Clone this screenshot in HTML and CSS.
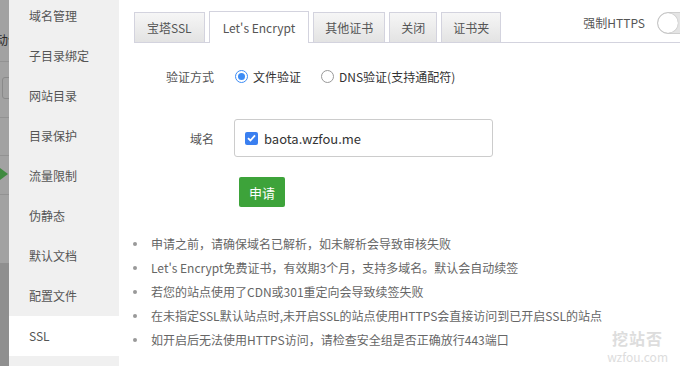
FILE: index.html
```html
<!DOCTYPE html>
<html lang="zh-CN">
<head>
  <meta charset="UTF-8" />
  <title>网站设置 - SSL</title>
  <link rel="stylesheet" href="styles.css">
</head>
<body>

  <div class="backdrop">
    <div class="bd-row bd-first"><span class="bd-text">活动创</span></div>
    <div class="bd-row bd-btns"><span class="bd-btn"></span></div>
    <div class="bd-row bd-short"></div>
    <div class="bd-row bd-play"><span class="play"></span></div>
    <div class="bd-row bd-mid"></div>
    <div class="bd-dark"></div>
  </div>

  <div class="sidebar">
    <a href="#">域名管理</a>
    <a href="#">子目录绑定</a>
    <a href="#">网站目录</a>
    <a href="#">目录保护</a>
    <a href="#">流量限制</a>
    <a href="#">伪静态</a>
    <a href="#">默认文档</a>
    <a href="#">配置文件</a>
    <a href="#" class="active">SSL</a>
  </div>

  <div class="main">
    <div class="tabbar">
      <div class="tab">宝塔SSL</div>
      <div class="tab active">Let's Encrypt</div>
      <div class="tab">其他证书</div>
      <div class="tab">关闭</div>
      <div class="tab">证书夹</div>
      <div class="force">
        <span>强制HTTPS</span>
        <span class="switch"><span class="knob"></span></span>
      </div>
    </div>

    <div class="form-row">
      <label class="form-label">验证方式</label>
      <div class="radios">
        <span class="radio checked"></span><span class="radio-text">文件验证</span>
        <span class="radio"></span><span class="radio-text">DNS验证(支持通配符)</span>
      </div>
    </div>

    <div class="form-row domain-row">
      <label class="form-label">域名</label>
      <div class="domain-box">
        <span class="check">
          <svg width="9" height="8" viewBox="0 0 9 8"><path d="M1 4.2 L3.4 6.5 L8 1.3" fill="none" stroke="#fff" stroke-width="1.8"/></svg>
        </span>
        <span class="domain">baota.wzfou.me</span>
      </div>
    </div>

    <div class="form-row btn-row">
      <button class="apply">申请</button>
    </div>

    <ul class="tips">
      <li>申请之前，请确保域名已解析，如未解析会导致审核失败</li>
      <li>Let's Encrypt免费证书，有效期3个月，支持多域名。默认会自动续签</li>
      <li>若您的站点使用了CDN或301重定向会导致续签失败</li>
      <li>在未指定SSL默认站点时,未开启SSL的站点使用HTTPS会直接访问到已开启SSL的站点</li>
      <li>如开启后无法使用HTTPS访问，请检查安全组是否正确放行443端口</li>
    </ul>

    <div class="watermark">
      <div class="wm-logo">挖站否</div>
      <div class="wm-url">wzfou.com</div>
    </div>
  </div>

</body>
</html>
```

FILE: styles.css
```css
* {
  margin: 0;
  padding: 0;
  box-sizing: border-box;
  font-family: "Noto Sans CJK SC", "Noto Sans", sans-serif;
}

body {
  width: 680px;
  height: 366px;
  overflow: hidden;
  display: flex;
  background: #fff;
  color: #333;
  font-size: 12px;
}

/* dimmed page behind the dialog */
.backdrop {
  width: 9px;
  flex-shrink: 0;
  background: #a2a2a2;
  overflow: hidden;
  display: flex;
  flex-direction: column;
}

.bd-row {
  border-bottom: 1px solid #929292;
  position: relative;
}

.bd-first {
  height: 62px;
}

.bd-text {
  position: absolute;
  top: 31px;
  left: -16px;
  white-space: nowrap;
  font-size: 12px;
  color: #2a2a2a;
}

.bd-btns {
  height: 56px;
}

.bd-btn {
  position: absolute;
  top: 15px;
  left: 2px;
  width: 12px;
  height: 22px;
  border: 1px solid #8a8a8a;
  border-radius: 3px;
}

.bd-short {
  height: 38px;
}

.bd-play {
  height: 39px;
}

.play {
  position: absolute;
  top: 12px;
  left: 0;
  border-left: 8px solid #3f8a3f;
  border-top: 6px solid transparent;
  border-bottom: 6px solid transparent;
}

.bd-mid {
  height: 68px;
  border-bottom: none;
}

.bd-dark {
  flex: 1;
  background: #8f8f8f;
}

/* sidebar */
.sidebar {
  width: 110px;
  flex-shrink: 0;
  background: #f0f0f0;
  margin-top: -4px;
}

.sidebar a {
  display: block;
  height: 40px;
  line-height: 40px;
  padding-left: 20px;
  color: #555;
  text-decoration: none;
  font-size: 12px;
}

.sidebar a.active {
  background: #fff;
}

/* main panel */
.main {
  flex: 1;
  position: relative;
  padding: 11px 0 0 15px;
}

.tabbar {
  display: flex;
  align-items: flex-end;
  height: 32px;
  border-bottom: 1px solid #d3d3de;
}

.tab {
  height: 30px;
  line-height: 29px;
  padding: 0 11px;
  margin-right: 4px;
  border: 1px solid #d3d3de;
  border-bottom: none;
  background: linear-gradient(#f6f6f6, #e3e3e3);
  color: #555;
  font-size: 12px;
  white-space: nowrap;
}

.tab:first-child {
  padding: 0 12px;
}

.tab.active {
  height: 32px;
  line-height: 32px;
  padding: 0 13px;
  margin-bottom: -1px;
  background: #fff;
}

.force {
  margin-left: auto;
  align-self: center;
  display: flex;
  align-items: center;
  color: #555;
  font-size: 12px;
  margin-top: -8px;
  margin-right: -21px;
}

.switch {
  display: inline-block;
  width: 44px;
  height: 22px;
  margin-left: 12px;
  border: 1px solid #cfcfcf;
  border-radius: 11px;
  background: #e4e4e4;
  position: relative;
}

.knob {
  position: absolute;
  top: 0;
  left: 0;
  width: 20px;
  height: 20px;
  border-radius: 50%;
  background: #fff;
  box-shadow: 0 0 1px rgba(0, 0, 0, 0.4);
}

/* form */
.form-row {
  display: flex;
  align-items: center;
}

.tabbar + .form-row {
  margin-top: 18px;
  height: 30px;
}

.form-label {
  width: 100px;
  padding-right: 20px;
  text-align: right;
  color: #555;
  font-size: 12px;
}

.radios {
  display: flex;
  align-items: center;
  margin-left: 1px;
}

.radio {
  width: 13px;
  height: 13px;
  border: 1px solid #999;
  border-radius: 50%;
  background: #fff;
  position: relative;
}

.radio.checked {
  border-color: #3c8cf5;
}

.radio.checked::after {
  content: "";
  position: absolute;
  top: 2px;
  left: 2px;
  width: 7px;
  height: 7px;
  border-radius: 50%;
  background: #3c8cf5;
}

.radio-text {
  margin: 0 20px 0 5px;
  font-size: 12px;
  color: #333;
}

.domain-row {
  margin-top: 28px;
}

.domain-box {
  width: 259px;
  height: 38px;
  border: 1px solid #ccc;
  border-radius: 3px;
  display: flex;
  align-items: center;
  padding-left: 10px;
}

.check {
  width: 13px;
  height: 13px;
  border-radius: 2px;
  background: #3a7ff0;
  display: flex;
  align-items: center;
  justify-content: center;
}

.domain {
  margin-left: 6px;
  font-size: 13px;
  color: #333;
}

.btn-row {
  margin-top: 20px;
  padding-left: 105px;
}

.apply {
  width: 46px;
  height: 30px;
  border: none;
  border-radius: 2px;
  background: #3da33a;
  color: #fff;
  font-size: 13px;
}

.tips {
  list-style: none;
  margin-top: 25px;
}

.tips li {
  position: relative;
  height: 24px;
  line-height: 24px;
  padding-left: 17px;
  color: #666;
  font-size: 12px;
  white-space: nowrap;
}

.tips li::before {
  content: "";
  position: absolute;
  left: -1px;
  top: 10px;
  width: 4px;
  height: 4px;
  border-radius: 50%;
  background: #999;
}

.watermark {
  position: absolute;
  right: 12px;
  bottom: 3px;
  text-align: center;
  color: #ddd;
}

.wm-logo {
  font-size: 16px;
  font-weight: bold;
  line-height: 17px;
  letter-spacing: 1px;
}

.wm-url {
  margin-top: 3px;
  font-size: 12px;
  line-height: 13px;
}
```
